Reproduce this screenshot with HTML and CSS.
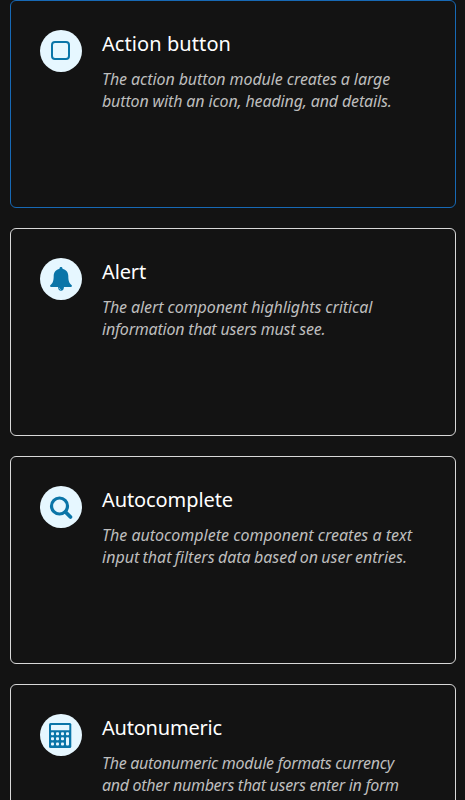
FILE: index.html
```html
<!DOCTYPE html>
<html lang="en">
<head>
<meta charset="utf-8">
<title>Components</title>
<link rel="stylesheet" href="styles.css">
</head>
<body>
<main class="cards">
  <article class="card card-active">
    <svg class="icon" viewBox="0 0 42 42"><circle class="disc" cx="21" cy="21" r="21"/><rect class="line" x="12" y="12" width="17" height="17" rx="3"/></svg>
    <div class="copy">
      <h2 class="wide">Action button</h2>
      <p><span class="snug">The action button module creates a large</span><span class="close">button with an icon, heading, and details.</span></p>
    </div>
  </article>
  <article class="card">
    <svg class="icon" viewBox="0 0 42 42"><circle class="disc" cx="21" cy="21" r="21"/><path class="fill" d="M21 9c1 0 1.500.7 1.500 1.700 3.500.8 5.800 3.500 5.800 7.300 0 5.200 1.200 7.500 3.400 9.300.8 1-.1 1.700-1 1.700H11.300c-.9 0-1.800-.7-1-1.700 2.200-1.800 3.400-4.100 3.400-9.300 0-3.800 2.300-6.500 5.800-7.300C19.500 9.700 20 9 21 9zM18 28.500h6c0 2.700-1.100 4.300-3 4.300s-3-1.600-3-4.300z"/><path class="glint" d="M19.300 29.800c0 1 .7 1.700 1.700 1.700"/></svg>
    <div class="copy">
      <h2 class="close">Alert</h2>
      <p><span class="snug">The alert component highlights critical</span><span class="tight">information that users must see.</span></p>
    </div>
  </article>
  <article class="card">
    <svg class="icon" viewBox="0 0 42 42"><circle class="disc" cx="21" cy="21" r="21"/><circle class="lens" cx="19.500" cy="20" r="8"/><path class="handle" d="M25.500 26l5 5"/></svg>
    <div class="copy">
      <h2 class="snug">Autocomplete</h2>
      <p><span>The autocomplete component creates a text</span><span class="words">input that filters data based on user entries.</span></p>
    </div>
  </article>
  <article class="card">
    <svg class="icon" viewBox="0 0 42 42"><circle class="disc" cx="21" cy="21" r="21"/><rect class="fill" x="9" y="9" width="22.300" height="25" rx="1.500"/><g class="keys"><rect x="11" y="11" width="18.300" height="5.300" rx=".5"/><rect x="11" y="18.300" width="3" height="3" rx="1"/><rect x="16" y="18.300" width="3" height="3" rx="1"/><rect x="21" y="18.300" width="3" height="3" rx="1"/><rect x="26" y="18.300" width="3" height="3" rx="1"/><rect x="11" y="23.300" width="3" height="3" rx="1"/><rect x="16" y="23.300" width="3" height="3" rx="1"/><rect x="21" y="23.300" width="3" height="3" rx="1"/><rect x="26" y="23.300" width="3" height="8.200" rx="1"/><rect x="11" y="28.500" width="3" height="3" rx="1"/><rect x="16" y="28.500" width="3" height="3" rx="1"/><rect x="21" y="28.500" width="3" height="3" rx="1"/></g></svg>
    <div class="copy">
      <h2 class="tight">Autonumeric</h2>
      <p><span class="tighter">The autonumeric module formats currency</span><span class="tighter">and other numbers that users enter in form</span></p>
    </div>
  </article>
</main>
</body>
</html>
```
FILE: styles.css
```css
* { box-sizing: border-box; }
html, body { height: 100%; margin: 0; overflow: hidden; background: #131313; }
.cards { display: flex; flex-direction: column; gap: 20px; width: 446px; height: 100%; margin-left: 10px; overflow: hidden; }
.card { display: flex; flex: none; gap: 20px; height: 208px; padding: 29px; border: 1px solid #d8d8d8; border-radius: 6px; }
.card-active { border-color: #1769b5; }
.icon { flex: none; width: 42px; height: 42px; }
.disc { fill: #e6f7ff; }
.fill { fill: #0a75a8; }
.line, .lens, .handle { fill: none; stroke: #0a75a8; stroke-width: 2; }
.lens { stroke-width: 3.2; }
.handle { stroke-width: 3.8; stroke-linecap: round; }
.glint { fill: none; stroke: #e6f7ff; stroke-width: .5; }
.keys { fill: #e6f7ff; }
.copy { white-space: nowrap; font-family: "Noto Sans", sans-serif; }
h2 { margin: 0 0 10px; color: #fff; font-size: 20px; line-height: 28px; font-weight: 400; }
p { margin: 0; color: #bebebe; font-size: 16px; line-height: 22px; font-style: italic; }
p span { display: block; }
.wide { letter-spacing: .08px; }
.snug { letter-spacing: -.09px; }
.close { letter-spacing: -.14px; }
.tight { letter-spacing: -.21px; }
.tighter { letter-spacing: -.29px; }
.words { word-spacing: -.9px; }
```
